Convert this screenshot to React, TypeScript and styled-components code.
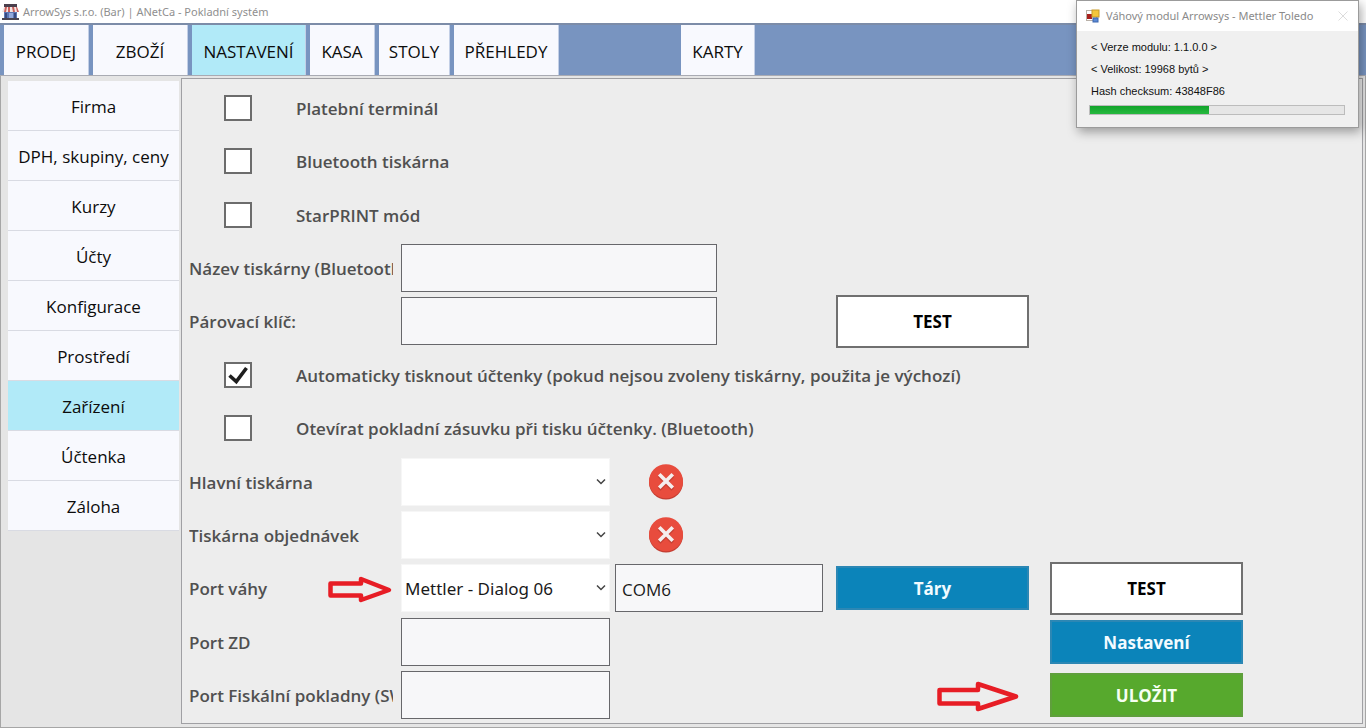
import React from "react";
import styled, { createGlobalStyle, css } from "styled-components";

const GlobalStyle = createGlobalStyle`
  * { box-sizing: border-box; }
  body {
    margin: 0;
    background: #e5e5e5;
    font-family: "Open Sans", "Noto Sans", sans-serif;
    color: #111;
  }
  button, input, select { font-family: inherit; margin: 0; }
`;

const Window = styled.div`
  position: relative;
  display: flex;
  flex-direction: column;
  min-height: 100vh;
`;

const TitleBar = styled.header`
  display: flex;
  align-items: center;
  gap: 4px;
  height: 23px;
  padding-left: 2px;
  background: #fff;
`;

const WindowTitle = styled.h1`
  margin: 0;
  font-family: "Noto Sans", sans-serif;
  font-size: 11px;
  line-height: 16px;
  font-weight: 400;
  color: #8f8f8f;
  white-space: nowrap;
`;

const NavBar = styled.nav`
  display: flex;
  gap: 4px;
  height: 53px;
  padding-left: 4px;
  background: #7894c0;
  border-top: 2px solid #7c8ca8;
  border-bottom: 1px solid #a9abb3;
`;

const Tab = styled.button<{ $width: number; $active?: boolean; $apart?: boolean }>`
  flex: none;
  width: ${(p) => p.$width}px;
  padding: 3px 0 0;
  margin-left: ${(p) => (p.$apart ? 118 : 0)}px;
  border: 0;
  border-right: 1px solid #c3cfe6;
  background: ${(p) => (p.$active ? "#b1eaf8" : "#f8f9fe")};
  font-size: 17px;
  line-height: 24px;
  color: #0c0c0c;
`;

const Body = styled.div`
  flex: 1;
  display: flex;
  padding: 2px 2px 3px 7px;
  border: 1px solid #a6a6a6;
  border-top: 0;
`;

const Sidebar = styled.nav`
  flex: none;
  width: 173px;
  padding-top: 3px;
`;

const SideItem = styled.button<{ $active?: boolean }>`
  display: block;
  width: 171px;
  height: 50px;
  padding: 2px 0 0;
  border: 0;
  border-bottom: 1px solid #d9dbe3;
  background: ${(p) => (p.$active ? "#b1eaf8" : "#f8f9fe")};
  font-size: 17px;
  line-height: 24px;
  color: #0c0c0c;
`;

const Panel = styled.main`
  flex: 1;
  display: grid;
  grid-template-columns: 212fr 214fr 221fr 214fr 193fr 119fr;
  grid-template-rows: repeat(12, minmax(52px, 1fr));
  padding: 2px 0 1px 7px;
  border: 1px solid #a0a0a4;
  background: #ededed;
`;

const CheckRow = styled.div`
  grid-column: 1 / -1;
  display: flex;
  align-items: center;
  gap: 44px;
  padding-left: 35px;
`;

const CheckBox = styled.span`
  position: relative;
  display: flex;
  width: 28px;
  height: 26px;

  input {
    appearance: none;
    width: 28px;
    height: 26px;
    border: 2px solid #6c6c6c;
    background: #fff;
  }
  svg {
    position: absolute;
    inset: 0;
    pointer-events: none;
    display: none;
  }
  input:checked + svg { display: block; }
`;

const labelText = css`
  padding-top: 2px;
  font-size: 17px;
  line-height: 24px;
  font-weight: 600;
  color: #505050;
  white-space: nowrap;
`;

const CheckLabel = styled.label`
  ${labelText}
`;

const LabelCell = styled.div`
  grid-column: 1;
  display: flex;
  align-items: center;
  justify-content: space-between;
  min-width: 0;
  margin-right: 8px;
  overflow: hidden;
`;

const FieldLabel = styled.label`
  ${labelText}
`;

const Cell = styled.div<{ $col: string; $gap: number; $align?: string }>`
  grid-column: ${(p) => p.$col};
  display: flex;
  align-items: center;
  justify-content: ${(p) => p.$align ?? "stretch"};
  min-width: 0;
  padding-right: ${(p) => p.$gap}px;
`;

const TextInput = styled.input<{ $wide?: boolean }>`
  width: ${(p) => (p.$wide ? "75%" : "100%")};
  height: 48px;
  padding: 2px 6px 0;
  border: 1px solid #67676b;
  border-radius: 0;
  background: #f7f7f9;
  font-size: 17px;
  line-height: 24px;
  color: #1a1a1a;
`;

const SelectBox = styled.div`
  position: relative;
  width: 100%;

  select {
    appearance: none;
    display: block;
    width: 100%;
    height: 48px;
    padding: 2px 24px 0 3px;
    border: 1px solid #f6f6f6;
    border-radius: 0;
    background: #fff;
    font-family: "Noto Sans", sans-serif;
    font-size: 17px;
    line-height: 24px;
    color: #1a1a1a;
  }
  svg {
    position: absolute;
    right: 4px;
    top: 20px;
    pointer-events: none;
  }
`;

const fills = {
  white: css`
    height: 53px;
    border: 2px solid #707070;
    background: #fff;
    color: #000;
  `,
  blue: css`
    height: 44px;
    border: 2px solid #2c87b4;
    background: #0b84ba;
    color: #f2fbff;
  `,
  green: css`
    height: 44px;
    border: 2px solid #5f9f3c;
    background: #57a92d;
    color: #f6fff2;
  `,
};

const PushButton = styled.button<{ $fill: keyof typeof fills }>`
  width: 100%;
  padding: 2px 0 0;
  font-size: 17px;
  line-height: 24px;
  font-weight: 700;
  ${(p) => fills[p.$fill]}
`;

const ClearButton = styled.button`
  display: flex;
  margin-left: 34px;
  padding: 0;
  border: 0;
  background: none;
`;

const Dialog = styled.section`
  position: absolute;
  top: 0;
  right: 7px;
  width: 283px;
  height: 128px;
  border: 1px solid #9b9b9b;
  background: #f0f0f0;
  box-shadow: 2px 4px 10px rgba(0, 0, 0, 0.35);
`;

const DialogTitle = styled.header`
  display: flex;
  align-items: center;
  height: 30px;
  padding: 0 10px 0 9px;
  background: #fff;

  h2 {
    flex: 1;
    margin: 0 0 0 6px;
    font-family: "Noto Sans", sans-serif;
    font-size: 11px;
    line-height: 16px;
    font-weight: 400;
    color: #8a8a8a;
    white-space: nowrap;
  }
  button {
    display: flex;
    padding: 0;
    border: 0;
    background: none;
  }
`;

const DialogBody = styled.div`
  padding: 5px 13px 0 12px;

  p {
    margin: 0 2px;
    font-family: "Liberation Sans", Arial, sans-serif;
    font-size: 11px;
    line-height: 22px;
    color: #111;
  }
`;

const ProgressTrack = styled.div`
  height: 10px;
  margin-top: 3px;
  border: 1px solid #bcbcbc;
  background: #e6e6e6;
`;

const ProgressFill = styled.div`
  height: 100%;
  background: linear-gradient(#12a42b, #27b93f);
`;

const ShopIcon = () => (
  <svg width="17" height="17" viewBox="0 0 17 17" aria-hidden="true">
    <rect x="2" y="1" width="13" height="4" fill="#4a3f4c" />
    <rect x="2" y="8" width="13" height="8" fill="#5d76b4" />
    <rect x="0" y="15" width="17" height="2" fill="#4b4450" />
    <path d="M2 4h13l2 5H0z" fill="#f3e4e2" />
    <path d="M3 4h2L4 9H2zM6 4h2v5H6zM10 4h2l1 5h-2zM14 4h1l2 5h-2z" fill="#c9605c" />
    <rect x="3" y="10" width="2" height="5" fill="#384a80" />
    <rect x="7" y="10" width="4" height="5" fill="#91a8dc" />
    <rect x="12" y="10" width="2" height="5" fill="#384a80" />
  </svg>
);

const FormIcon = () => (
  <svg width="14" height="14" viewBox="0 0 14 14" aria-hidden="true">
    <rect x="0.5" y="1.5" width="10" height="10" fill="#fff" stroke="#b9b1a8" />
    <rect x="1" y="5" width="5" height="5" fill="#a8201c" />
    <rect x="6" y="1" width="7" height="7" fill="#f3c63c" stroke="#c79a28" />
    <rect x="7" y="9" width="5" height="4" fill="#5b8ad6" stroke="#3d66ad" />
  </svg>
);

const CloseIcon = () => (
  <svg width="10" height="10" viewBox="0 0 10 10" aria-hidden="true">
    <path d="M0.5 0.5l9 9M9.5 0.5l-9 9" stroke="#dcdcdc" fill="none" />
  </svg>
);

const Chevron = () => (
  <svg width="10" height="8" viewBox="0 0 10 8" aria-hidden="true">
    <path d="M1 1.5l4 4 4-4" stroke="#444" strokeWidth="1.5" fill="none" />
  </svg>
);

const CheckMark = () => (
  <svg width="28" height="26" viewBox="0 0 28 26" aria-hidden="true">
    <path d="M5.5 13.5l6.8 6L22.5 6" stroke="#1e1e1e" strokeWidth="3.6" fill="none" />
  </svg>
);

const RedCross = () => (
  <svg width="34" height="36" viewBox="0 0 34 36" aria-hidden="true">
    <circle cx="17" cy="18.5" r="17" fill="#c33d31" />
    <circle cx="17" cy="17.3" r="17" fill="#e84c3d" />
    <path d="M11.5 12l11 11M22.5 12l-11 11" stroke="#c94134" strokeWidth="4" strokeLinecap="square" transform="translate(0 1)" />
    <path d="M11.5 11.5l11 11M22.5 11.5l-11 11" stroke="#f4eeee" strokeWidth="3.6" strokeLinecap="square" />
  </svg>
);

const ArrowDrawing = styled.svg`
  flex: none;
  margin-top: 4px;
`;

const PortArrow = () => (
  <ArrowDrawing width="65" height="28" viewBox="0 0 65 28" aria-hidden="true">
    <path d="M2.5 7.5H33V3L61 14 33 24V19.5H2.5z" fill="none" stroke="#e71d25" strokeWidth="4.5" strokeLinejoin="round" />
  </ArrowDrawing>
);

const SaveArrow = () => (
  <ArrowDrawing width="82" height="32" viewBox="0 0 82 32" aria-hidden="true">
    <path d="M2.5 9H41V3L79 15.5 41 28V22.500H2.5z" fill="none" stroke="#e71d25" strokeWidth="4.5" strokeLinejoin="round" />
  </ArrowDrawing>
);

const tabs = [
  { text: "PRODEJ", width: 85 },
  { text: "ZBOŽÍ", width: 95 },
  { text: "NASTAVENÍ", width: 114, active: true },
  { text: "KASA", width: 65 },
  { text: "STOLY", width: 71 },
  { text: "PŘEHLEDY", width: 105 },
  { text: "KARTY", width: 74, apart: true },
];

const sections = [
  "Firma",
  "DPH, skupiny, ceny",
  "Kurzy",
  "Účty",
  "Konfigurace",
  "Prostředí",
  "Zařízení",
  "Účtenka",
  "Záloha",
];

type CheckProps = { id: string; text: string; checked?: boolean };

const CheckOption = ({ id, text, checked }: CheckProps) => (
  <CheckRow>
    <CheckBox>
      <input type="checkbox" id={id} defaultChecked={checked} />
      <CheckMark />
    </CheckBox>
    <CheckLabel htmlFor={id}>{text}</CheckLabel>
  </CheckRow>
);

const Label = ({ id, text, children }: { id: string; text: string; children?: React.ReactNode }) => (
  <LabelCell>
    <FieldLabel htmlFor={id}>{text}</FieldLabel>
    {children}
  </LabelCell>
);

const Select = ({ id, option }: { id: string; option: string }) => (
  <SelectBox>
    <select id={id} defaultValue={option}>
      <option value={option}>{option}</option>
    </select>
    <Chevron />
  </SelectBox>
);

const PrinterRow = ({ id, text }: { id: string; text: string }) => (
  <>
    <Label id={id} text={text} />
    <Cell $col="2" $gap={5}>
      <Select id={id} option="" />
    </Cell>
    <Cell $col="3" $gap={0}>
      <ClearButton type="button" aria-label={`Zrušit: ${text}`}>
        <RedCross />
      </ClearButton>
    </Cell>
  </>
);

export default function App() {
  return (
    <>
      <GlobalStyle />
      <Window>
        <TitleBar>
          <ShopIcon />
          <WindowTitle>ArrowSys s.r.o. (Bar) | ANetCa - Pokladní systém</WindowTitle>
        </TitleBar>
        <NavBar>
          {tabs.map((t) => (
            <Tab key={t.text} type="button" $width={t.width} $active={t.active} $apart={t.apart}>
              {t.text}
            </Tab>
          ))}
        </NavBar>
        <Body>
          <Sidebar>
            {sections.map((s) => (
              <SideItem key={s} type="button" $active={s === "Zařízení"}>
                {s}
              </SideItem>
            ))}
          </Sidebar>
          <Panel>
            <CheckOption id="terminal" text="Platební terminál" />
            <CheckOption id="bluetooth" text="Bluetooth tiskárna" />
            <CheckOption id="starprint" text="StarPRINT mód" />

            <Label id="printer-name" text="Název tiskárny (Bluetooth):" />
            <Cell $col="2 / 4" $gap={14}>
              <TextInput id="printer-name" $wide />
            </Cell>

            <Label id="pair-key" text="Párovací klíč:" />
            <Cell $col="2 / 4" $gap={14}>
              <TextInput id="pair-key" $wide />
            </Cell>
            <Cell $col="4" $gap={21}>
              <PushButton type="button" $fill="white">TEST</PushButton>
            </Cell>

            <CheckOption
              id="auto-print"
              text="Automaticky tisknout účtenky (pokud nejsou zvoleny tiskárny, použita je výchozí)"
              checked
            />
            <CheckOption id="drawer" text="Otevírat pokladní zásuvku při tisku účtenky. (Bluetooth)" />

            <PrinterRow id="main-printer" text="Hlavní tiskárna" />
            <PrinterRow id="order-printer" text="Tiskárna objednávek" />

            <Label id="scale-port" text="Port váhy">
              <PortArrow />
            </Label>
            <Cell $col="2" $gap={5}>
              <Select id="scale-port" option="Mettler - Dialog 06" />
            </Cell>
            <Cell $col="3" $gap={13}>
              <TextInput aria-label="COM port" defaultValue="COM6" />
            </Cell>
            <Cell $col="4" $gap={21}>
              <PushButton type="button" $fill="blue">Táry</PushButton>
            </Cell>
            <Cell $col="5" $gap={0}>
              <PushButton type="button" $fill="white">TEST</PushButton>
            </Cell>

            <Label id="zd-port" text="Port ZD" />
            <Cell $col="2" $gap={5}>
              <TextInput id="zd-port" />
            </Cell>
            <Cell $col="5" $gap={0}>
              <PushButton type="button" $fill="blue">Nastavení</PushButton>
            </Cell>

            <Label id="fiscal-port" text="Port Fiskální pokladny (SW)" />
            <Cell $col="2" $gap={5}>
              <TextInput id="fiscal-port" />
            </Cell>
            <Cell $col="4" $gap={31} $align="flex-end">
              <SaveArrow />
            </Cell>
            <Cell $col="5" $gap={0}>
              <PushButton type="button" $fill="green">ULOŽIT</PushButton>
            </Cell>
          </Panel>
        </Body>
        <Dialog role="dialog" aria-labelledby="module-title">
          <DialogTitle>
            <FormIcon />
            <h2 id="module-title">Váhový modul Arrowsys - Mettler Toledo</h2>
            <button type="button" aria-label="Zavřít">
              <CloseIcon />
            </button>
          </DialogTitle>
          <DialogBody>
            <p>&lt; Verze modulu: 1.1.0.0 &gt;</p>
            <p>&lt; Velikost: 19968 bytů &gt;</p>
            <p>Hash checksum: 43848F86</p>
            <ProgressTrack role="progressbar" aria-label="Průběh" aria-valuenow={47}>
              <ProgressFill style={{ width: "47%" }} />
            </ProgressTrack>
          </DialogBody>
        </Dialog>
      </Window>
    </>
  );
}
